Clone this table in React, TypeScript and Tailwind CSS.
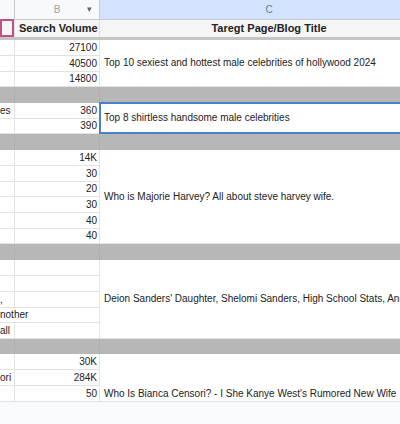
import React from "react";

type R = { a?: string; b?: string; h: 15 | 16; aOver?: boolean };

const font = { fontFamily: '"Liberation Sans", Arial, sans-serif' };

function Row({ r }: { r: R }) {
  const hc = r.h === 15 ? "h-[15px]" : "h-[16px]";
  return (
    <div className={`flex ${hc}`}>
      <div
        className={`w-[15px] shrink-0 border-b border-[#e2e2e2] flex items-end pb-[1px] leading-[12px] whitespace-nowrap ${
          r.aOver ? "overflow-visible" : "border-r overflow-hidden"
        }`}
      >
        {r.a ?? ""}
      </div>
      <div className="w-[85px] shrink-0 border-r border-b border-[#e2e2e2] flex items-end justify-end pr-[2px] pb-[1px] leading-[12px]">
        {r.b ?? ""}
      </div>
    </div>
  );
}

function Section({
  rows,
  c,
  align = "center",
  selected = false,
}: {
  rows: R[];
  c: string;
  align?: "center" | "end";
  selected?: boolean;
}) {
  return (
    <div className="flex">
      <div className="flex flex-col">
        {rows.map((r, i) => (
          <Row key={i} r={r} />
        ))}
      </div>
      <div
        className={`relative w-[338px] shrink-0 border-b border-[#e2e2e2] flex pl-[4px] whitespace-nowrap leading-[12px] ${
          align === "center" ? "items-center" : "items-end pb-[1px]"
        }`}
      >
        {c}
        {selected && (
          <div className="absolute -left-[1px] -top-[1px] right-0 -bottom-[1px] border-2 border-[#4a80d4]" />
        )}
      </div>
    </div>
  );
}

function Band({ h }: { h: 15 | 16 }) {
  return (
    <div className={`flex ${h === 15 ? "h-[15px]" : "h-[16px]"} bg-[#b7b7b7]`}>
      <div className="w-[15px] shrink-0 border-r border-[#b0b0b0]" />
      <div className="w-[85px] shrink-0 border-r border-[#b0b0b0]" />
      <div className="w-[338px] shrink-0" />
    </div>
  );
}

export default function App() {
  return (
    <div
      className="w-[400px] h-[424px] overflow-hidden bg-white text-[10px] text-[#222222] flex flex-col"
      style={font}
    >
      <div className="w-[438px] flex flex-col">
        {/* column headers */}
        <div className="flex h-[20px]">
          <div className="w-[15px] shrink-0 bg-[#f8f9fa] border-r border-b border-[#c7c9cc]" />
          <div className="w-[85px] shrink-0 bg-[#f8f9fa] border-r border-b border-[#c7c9cc] relative flex items-center justify-center text-[10px] text-[#9aa0a6]">
            B
            <span className="absolute right-[7px] top-[3px] text-[9px] text-[#5f6368]">▾</span>
          </div>
          <div className="w-[338px] shrink-0 bg-[#d3e3fd] border-b border-[#c7c9cc] flex items-center justify-center text-[10px] text-[#6b7a90]">
            C
          </div>
        </div>
        {/* title row */}
        <div className="flex h-[17px] bg-[#f5f5f5] font-bold text-[11px] leading-[13px]">
          <div className="relative w-[15px] shrink-0 border-r border-[#e2e2e2]">
            <div className="absolute inset-0 -top-[1px] border-2 border-[#bf5185]" />
          </div>
          <div className="w-[85px] shrink-0 border-r border-[#e2e2e2] flex items-end pl-[4px] pb-[2px] whitespace-nowrap">
            Search Volume
          </div>
          <div className="w-[338px] shrink-0 flex items-end justify-center pb-[2px]">
            Taregt Page/Blog Title
          </div>
        </div>
        <div className="h-[3px] bg-[#c4c4c4]" />

        <Section
          rows={[
            { b: "27100", h: 16 },
            { b: "40500", h: 16 },
            { b: "14800", h: 15 },
          ]}
          c="Top 10 sexiest and hottest male celebrities of hollywood 2024"
        />
        <Band h={16} />
        <Section
          rows={[
            { a: "es", b: "360", h: 16 },
            { b: "390", h: 15 },
          ]}
          c="Top 8 shirtless handsome male celebrities"
          selected
        />
        <Band h={16} />
        <Section
          rows={[
            { b: "14K", h: 16 },
            { b: "30", h: 16 },
            { b: "20", h: 15 },
            { b: "30", h: 16 },
            { b: "40", h: 16 },
            { b: "40", h: 15 },
          ]}
          c="Who is Majorie Harvey? All about steve harvey wife."
        />
        <Band h={16} />
        <Section
          rows={[
            { h: 16 },
            { h: 16 },
            { a: ",", h: 16 },
            { a: "nother", h: 15, aOver: true },
            { a: "all", h: 16 },
          ]}
          c="Deion Sanders' Daughter, Shelomi Sanders, High School Stats, And More"
        />
        <Band h={15} />
        <Section
          rows={[
            { b: "30K", h: 16 },
            { a: "ori", b: "284K", h: 16 },
            { b: "50", h: 16 },
          ]}
          c="Who Is Bianca Censori? - I She Kanye West's Rumored New Wife"
          align="end"
        />
      </div>
      <div className="flex-1 bg-[#f8fafd]" />
    </div>
  );
}
